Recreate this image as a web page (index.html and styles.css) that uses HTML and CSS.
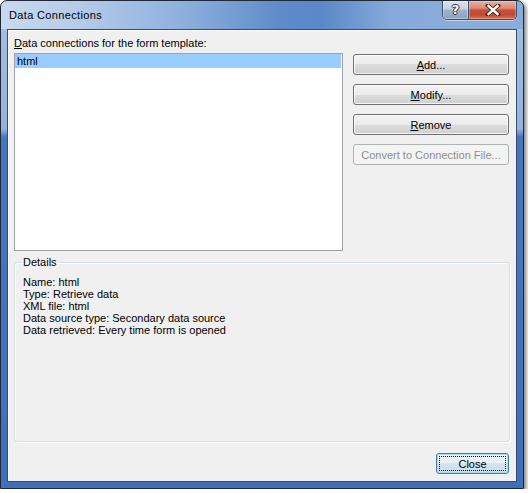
FILE: index.html
```html
<!DOCTYPE html>
<html>
<head>
<meta charset="utf-8">
<link rel="stylesheet" href="styles.css">
</head>
<body>
<div class="window">
  <div class="titlebar">
    <span class="title">Data Connections</span>
    <div class="caption-btns">
      <div class="cbtn help"><span>?</span></div>
      <div class="cbtn close">
        <svg width="16" height="12" viewBox="0 0 16 12">
          <path d="M3 1.5 L13 10.5 M13 1.5 L3 10.5" stroke="#3a2a28" stroke-width="4.2" stroke-linecap="square"/>
          <path d="M3.5 2 L12.5 10 M12.5 2 L3.5 10" stroke="#ffffff" stroke-width="2.4" stroke-linecap="square"/>
        </svg>
      </div>
    </div>
  </div>
  <div class="client">
    <div class="toprow">
      <div class="leftcol">
        <div class="label"><u>D</u>ata connections for the form template:</div>
        <div class="listbox">
          <div class="row selected">html</div>
        </div>
      </div>
      <div class="btncol">
        <button class="btn"><u>A</u>dd...</button>
        <button class="btn"><u>M</u>odify...</button>
        <button class="btn"><u>R</u>emove</button>
        <button class="btn disabled">Convert to Connection File...</button>
      </div>
    </div>
    <fieldset class="details">
      <legend>Details</legend>
      <div class="line">Name: html</div>
      <div class="line">Type: Retrieve data</div>
      <div class="line">XML file: html</div>
      <div class="line">Data source type: Secondary data source</div>
      <div class="line">Data retrieved: Every time form is opened</div>
    </fieldset>
    <div class="footer">
      <button class="btn default">Close</button>
    </div>
  </div>
</div>
</body>
</html>
```

FILE: styles.css
```css
* { box-sizing: border-box; }
html, body { margin: 0; padding: 0; background: #ffffff; }
body {
  font-family: "Liberation Sans", Arial, sans-serif;
  font-size: 11px;
  color: #000;
}
.window {
  width: 524px;
  height: 489px;
  border: 1px solid #1e2836;
  border-radius: 7px 7px 0 0;
  box-shadow: 2px 2px 4px rgba(0,0,0,0.55);
  padding: 0 6px 6px 6px;
  display: flex;
  flex-direction: column;
  background:
    linear-gradient(90deg, #c9d9ef 0, #b4cbea 80px, #8fb0dd 180px, #5e8bca 280px, #5a88c8 320px, #86aada 390px, #8badda 460px, #8aacd9 524px) top left / 100% 28px no-repeat,
    linear-gradient(180deg, #a4c0e5 0, #93b3de 128px, #4676be 136px, #3f70b9 100%);
}
.titlebar {
  height: 28px;
  display: flex;
  align-items: flex-start;
  flex: none;
}
.title {
  flex: 1;
  line-height: 28px;
  padding-left: 2px;
  letter-spacing: 0.35px;
  color: #000;
}
.caption-btns {
  display: flex;
  border: 1px solid #3d4f6a;
  border-top: none;
  border-radius: 0 0 5px 5px;
  overflow: hidden;
  height: 19px;
  box-shadow: 0 1px 0 rgba(255,255,255,0.45);
}
.cbtn {
  height: 18px;
  display: flex;
  align-items: center;
  justify-content: center;
}
.help {
  width: 26px;
  background: linear-gradient(180deg, #dbe4f0 0, #c4d2e4 45%, #9eb2cc 50%, #8aa2c0 100%);
  border-right: 1px solid #3d4f6a;
  box-shadow: inset 0 0 0 1px rgba(255,255,255,0.35);
}
.help span {
  font-family: "DejaVu Sans", sans-serif;
  font-weight: bold;
  font-size: 13px;
  color: #fff;
  text-shadow: -1px 0 #2a3446, 1px 0 #2a3446, 0 -1px #2a3446, 0 1px #2a3446;
  line-height: 18px;
}
.close {
  width: 47px;
  background: linear-gradient(180deg, #e9b0a2 0, #d98a78 40%, #c6503a 50%, #c24a30 75%, #d8705a 100%);
  box-shadow: inset 0 0 0 1px rgba(255,220,210,0.35);
}
.close svg { display: block; }

.client {
  flex: 1;
  background: #f0f0f0;
  border: 1px solid #3a4d68;
  box-shadow: inset 1px 1px 0 #ffffff;
  padding: 7px 6px 7px 6px;
  display: flex;
  flex-direction: column;
}
.toprow {
  display: grid;
  grid-template-columns: 329px 156px;
  column-gap: 10px;
}
.leftcol { display: flex; flex-direction: column; }
.label {
  line-height: 13px;
  height: 13px;
  margin-bottom: 3px;
}
.listbox {
  height: 198px;
  background: #fff;
  border: 1px solid #9ea3aa;
  padding: 0 1px 0 0;
}
.row {
  height: 14px;
  line-height: 15px;
  padding-left: 2px;
}
.row.selected { background: #99ccff; }

.btncol {
  display: flex;
  flex-direction: column;
  gap: 9px;
  padding-top: 17px;
}
.btn {
  font-family: "Liberation Sans", Arial, sans-serif;
  font-size: 11px;
  color: #000;
  height: 21px;
  padding: 1px 0 0 0;
  margin: 0;
  border: 1px solid #707070;
  border-radius: 3px;
  background: linear-gradient(180deg, #f3f3f3 0, #ebebeb 50%, #dddddd 50%, #cfcfcf 100%);
  box-shadow: inset 0 0 0 1px rgba(255,255,255,0.75);
  line-height: 17px;
  text-align: center;
}
.btn.disabled {
  color: #8d8d8d;
  border-color: #adb2b5;
  background: #f4f4f4;
  box-shadow: none;
}
.details {
  flex: 1;
  margin: 5px 0 0 0;
  padding: 7px 7px 0 7px;
  border: 1px solid #d5dfe5;
  border-radius: 3px;
  box-shadow: inset 1px 1px 0 #ffffff, 1px 1px 0 #ffffff;
  min-width: 0;
}
.details legend {
  padding: 0 1px;
  line-height: 13px;
}
.line {
  line-height: 12px;
  height: 12px;
  padding-left: 1px;
}
.footer {
  display: flex;
  justify-content: flex-end;
  margin-top: 11px;
  padding-right: 1px;
}
.btn.default {
  position: relative;
  width: 73px;
  border-color: #3c7fb1;
  background: linear-gradient(180deg, #f1f7fb 0, #e7f1f8 50%, #d4e5f0 50%, #c9dde9 100%);
  box-shadow: inset 0 0 0 1px #a6dcf7;
}
.btn.default::after {
  content: "";
  position: absolute;
  left: 2px; top: 2px; right: 2px; bottom: 2px;
  border: 1px dotted #000;
}
```
